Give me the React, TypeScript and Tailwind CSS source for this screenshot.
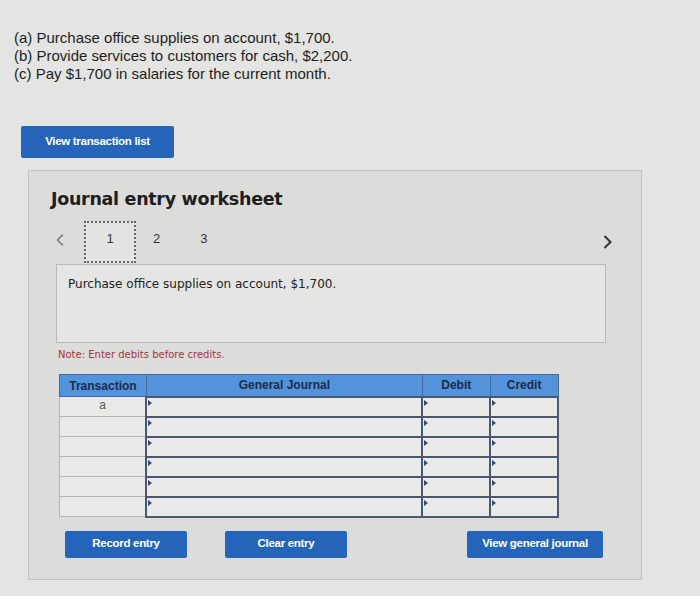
import React from "react";

const rows = ["a", "", "", "", "", ""];

function Marker() {
  return (
    <span className="absolute left-[1px] top-[2px] h-0 w-0 border-y-[3px] border-l-[4px] border-y-transparent border-l-[#2f4a78]" />
  );
}

function BlueButton({ label, className }: { label: string; className: string }) {
  return (
    <button
      type="button"
      className={`flex items-center justify-center rounded-[2px] bg-[#2465b9] text-[11.5px] font-bold tracking-[-0.3px] text-white ${className}`}
      style={{ fontFamily: '"Liberation Sans", Arial, sans-serif' }}
    >
      {label}
    </button>
  );
}

export default function App() {
  return (
    <div
      className="h-[596px] w-[700px] overflow-hidden bg-[#e4e4e2] text-[#222]"
      style={{ fontFamily: '"Liberation Sans", Arial, sans-serif' }}
    >
      <div className="pl-[14px] pt-[29px] text-[15px] leading-[18px] tracking-[0px] text-[#1e1e1e]">
        <p>(a) Purchase office supplies on account, $1,700.</p>
        <p>(b) Provide services to customers for cash, $2,200.</p>
        <p>(c) Pay $1,700 in salaries for the current month.</p>
      </div>

      <div className="ml-[21px] mt-[43px]">
        <BlueButton label="View transaction list" className="h-[32px] w-[153px]" />
      </div>

      <div className="ml-[28px] mt-[12px] h-[410px] w-[614px] border border-[#c2c2c0] bg-[#dcdcda]">
        <h2
          className="ml-[22px] mt-[16px] text-[17.5px] font-bold leading-[24px] tracking-[-0.3px] text-[#1e1e1e]"
          style={{ fontFamily: '"DejaVu Sans", Verdana, sans-serif' }}
        >
          Journal entry worksheet
        </h2>

        <div className="mt-[10px] flex h-[42px] items-center text-[13px] text-[#333]">
          <svg className="-mt-[4px] ml-[26px] h-[14px] w-[10px]" viewBox="0 0 10 14" fill="none">
            <path d="M8 1.5 L2.5 7 L8 12.5" stroke="#777" strokeWidth="1.6" />
          </svg>
          <div className="ml-[19px] flex h-[42px] w-[52px] items-center justify-center border-2 border-dotted border-[#666] bg-[#e3e3e1] pb-[6px]">
            1
          </div>
          <span className="ml-[17px] -mt-[6px]">2</span>
          <span className="ml-[40px] -mt-[6px]">3</span>
          <svg className="ml-auto mr-[28px] h-[16px] w-[11px]" viewBox="0 0 11 16" fill="none">
            <path d="M2.5 2 L8.5 8 L2.5 14" stroke="#333" strokeWidth="2" />
          </svg>
        </div>

        <div className="ml-[27px] mt-[1px] h-[79px] w-[550px] border border-[#b9b9b7] bg-[#e5e5e3] px-[11px] pt-[10px]">
          <p
            className="text-[12px] text-[#222]"
            style={{ fontFamily: '"DejaVu Sans", Verdana, sans-serif' }}
          >
            Purchase office supplies on account, $1,700.
          </p>
        </div>

        <p
          className="ml-[29px] mt-[4px] text-[10px] text-[#a8323f]"
          style={{ fontFamily: '"DejaVu Sans", Verdana, sans-serif' }}
        >
          Note: Enter debits before credits.
        </p>

        <table className="ml-[30px] mt-[12px] w-[500px] border-collapse text-[12px]">
          <thead>
            <tr className="h-[22px] bg-[#5293dc] font-bold text-[#1c2b47]">
              <th className="w-[87px] border border-[#3e6aa6] text-center">Transaction</th>
              <th className="w-[277px] border border-[#3e6aa6] text-center">General Journal</th>
              <th className="w-[68px] border border-[#3e6aa6] text-center">Debit</th>
              <th className="w-[68px] border border-[#3e6aa6] text-center">Credit</th>
            </tr>
          </thead>
          <tbody>
            {rows.map((t, i) => (
              <tr key={i} className="h-[20px]">
                <td className="border border-[#b4b4b2] bg-[#e9e9e7] text-center align-top text-[12px] leading-[16px] text-[#555]">
                  {t}
                </td>
                <td className="relative border-2 border-[#4b5870] bg-[#e9e9e7]">
                  <Marker />
                </td>
                <td className="relative border-2 border-[#4b5870] bg-[#e9e9e7]">
                  <Marker />
                </td>
                <td className="relative border-2 border-[#4b5870] bg-[#e9e9e7]">
                  <Marker />
                </td>
              </tr>
            ))}
          </tbody>
        </table>

        <div className="mt-[13px] flex">
          <BlueButton label="Record entry" className="ml-[36px] h-[27px] w-[122px]" />
          <BlueButton label="Clear entry" className="ml-[38px] h-[27px] w-[122px]" />
          <BlueButton label="View general journal" className="ml-[120px] h-[27px] w-[136px]" />
        </div>
      </div>
    </div>
  );
}
